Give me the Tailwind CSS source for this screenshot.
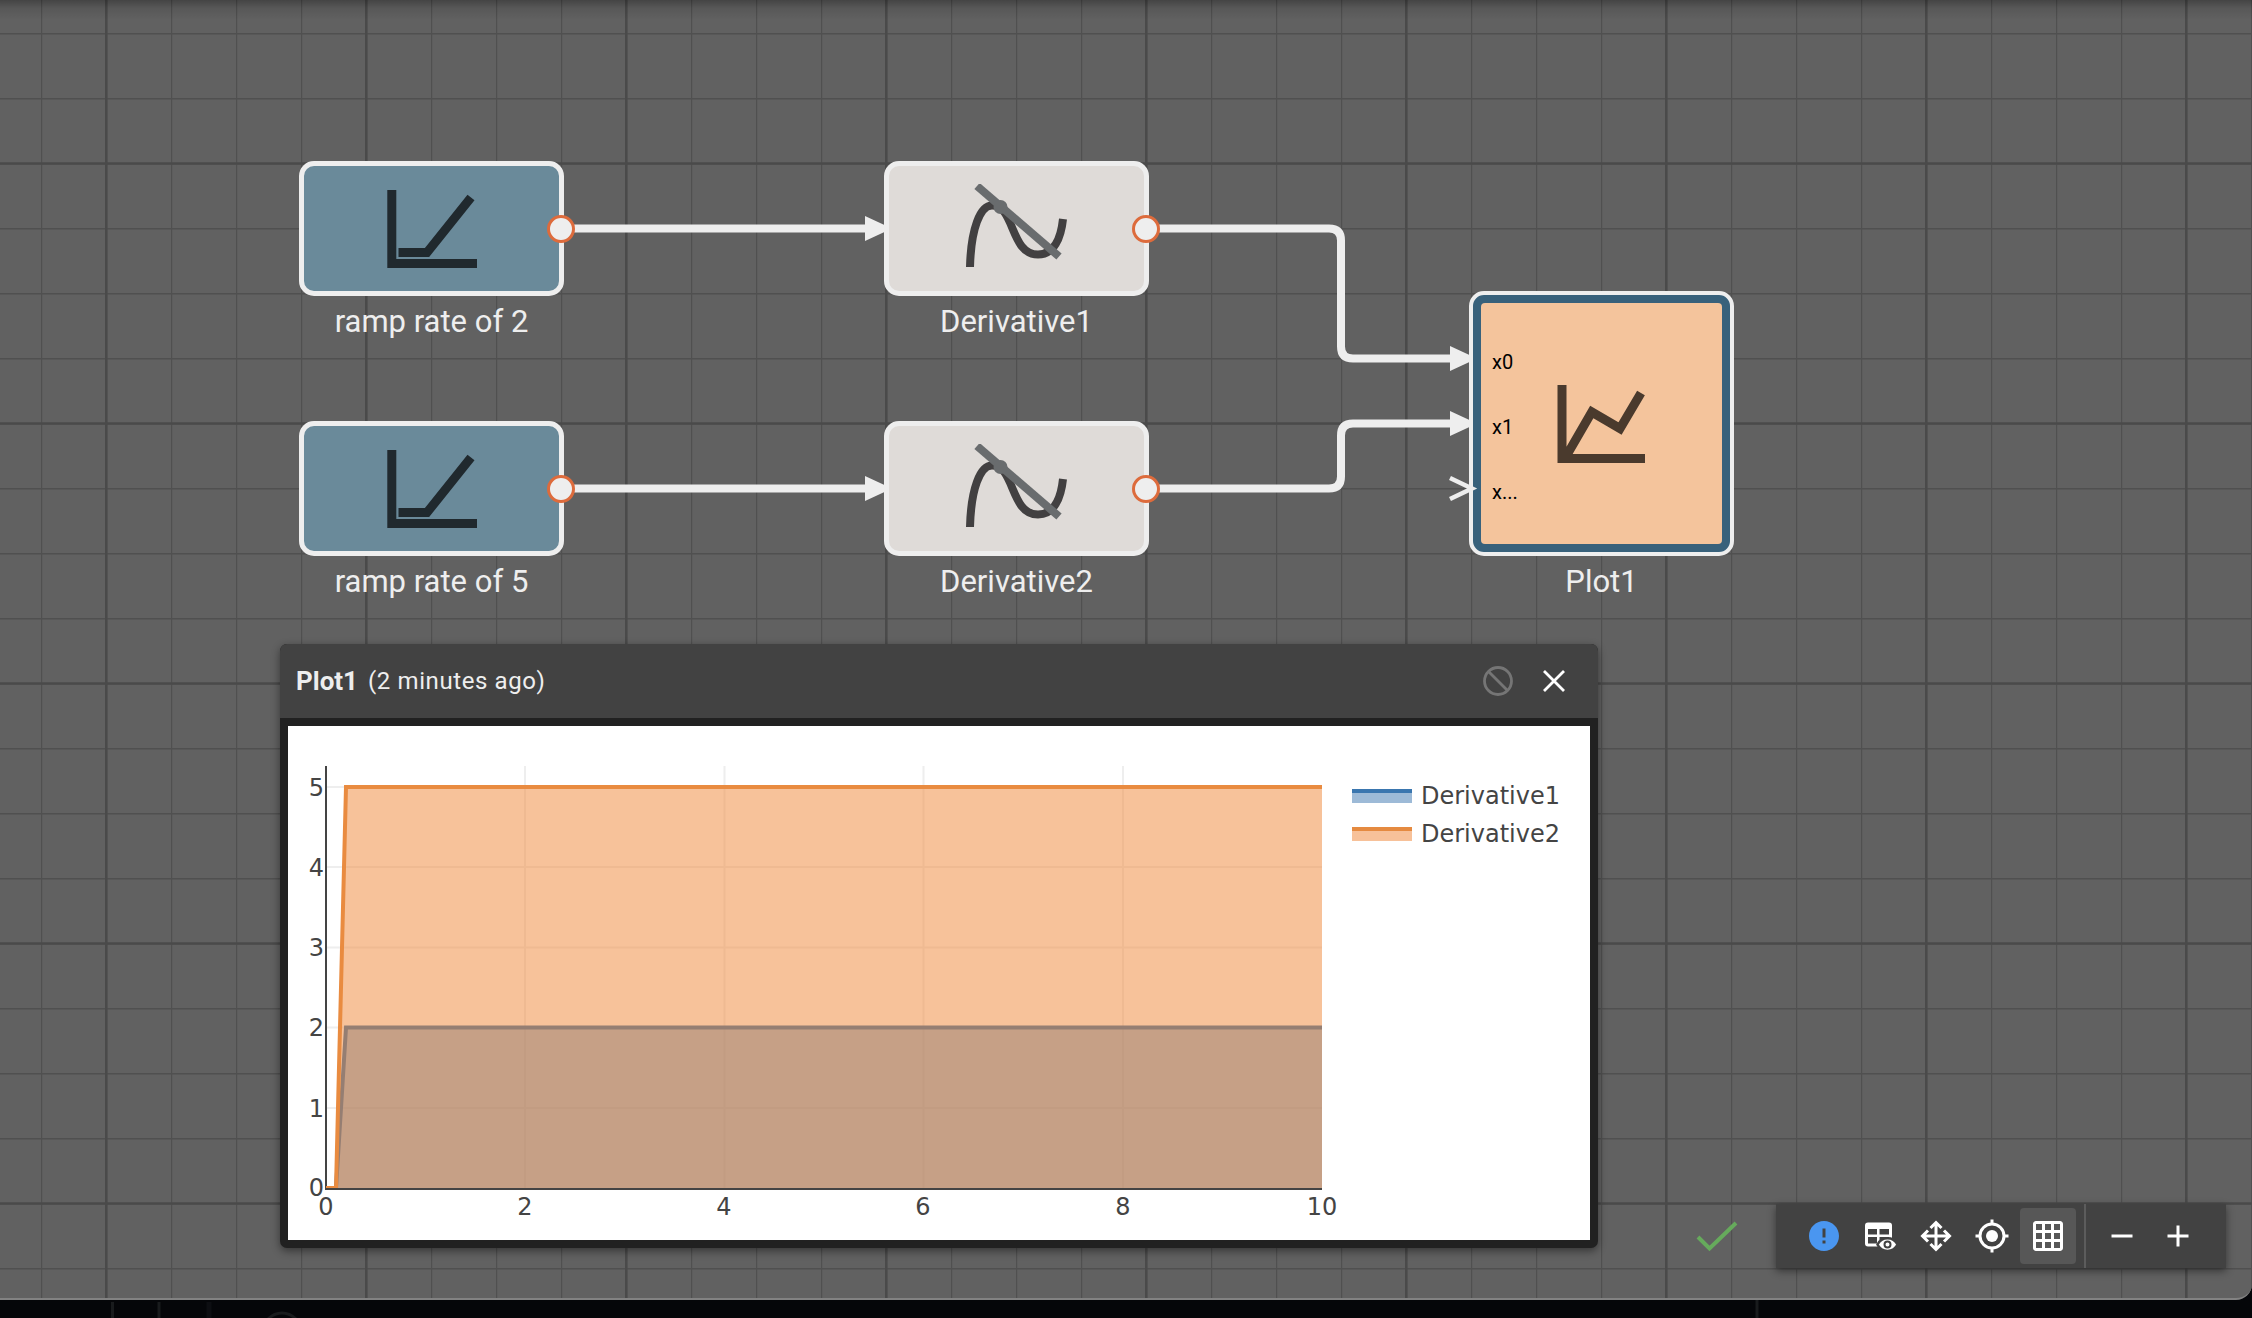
<!DOCTYPE html>
<html lang="en">
<head>
<meta charset="utf-8">
<title>Model canvas</title>
<script src="https://cdn.jsdelivr.net/npm/@tailwindcss/browser@4"></script>
</head>
<body class="flex h-screen flex-col overflow-hidden bg-[#050609] font-['Roboto',sans-serif] text-[#eeeeee]">
<main class="relative flex-1 overflow-hidden rounded-br-[16px] border-b-2 border-[#828282] bg-[#616161]">
  <!-- grid and edges -->
  <svg class="absolute inset-0 h-full w-full" aria-hidden="true">
    <defs>
      <pattern id="minor" x="41" y="33" width="65" height="65" patternUnits="userSpaceOnUse"><path d="M0 0.75H65M0.5 0V65" stroke="#505050" stroke-width="1.5"/></pattern>
      <pattern id="major" x="105" y="162" width="260" height="260" patternUnits="userSpaceOnUse"><path d="M0 1.5H260M1.25 0V260" stroke="#4a4a4a" stroke-width="2.5"/></pattern>
      <linearGradient id="shade" x1="0" y1="0" x2="0" y2="1"><stop offset="0" stop-color="#000" stop-opacity=".3"/><stop offset=".4" stop-color="#000" stop-opacity=".1"/><stop offset="1" stop-color="#000" stop-opacity="0"/></linearGradient>
    </defs>
    <rect width="100%" height="100%" fill="url(#minor)"/>
    <rect width="100%" height="100%" fill="url(#major)"/>
    <rect width="100%" height="20" fill="url(#shade)"/>
    <g fill="none" stroke="#eeeeee" stroke-width="8">
      <path d="M561 228.500H870M561 488.500H870"/>
      <path d="M1146 228.500H1329Q1341 228.500 1341 240.500V346.500Q1341 358.500 1353 358.500H1455"/>
      <path d="M1146 488.500H1329Q1341 488.500 1341 476.500V435.500Q1341 423.500 1353 423.500H1455"/>
    </g>
    <g fill="#eeeeee">
      <path d="M865 216L892 228.500L865 241ZM865 476L892 488.500L865 501ZM1450 346L1477 358.500L1450 371ZM1450 411L1477 423.500L1450 436Z"/>
    </g>
  </svg>

  <!-- ramp blocks -->
  <figure class="absolute left-[299px] top-[161px] flex w-[265px] flex-col items-center">
    <div class="flex h-[135px] w-full items-center justify-center rounded-[15px] border-5 border-[#eeeeee] bg-[#6a8a9a]">
      <svg class="h-[80px] w-[90px]" viewBox="387 188 90 80" fill="none" stroke="#20292e" stroke-width="9"><path d="M391.800 189V262.500H477M398.500 251.500H427L471 196.500"/></svg>
    </div>
    <figcaption class="mt-[6px] text-[31px] leading-10 whitespace-nowrap">ramp rate of 2</figcaption>
    <span class="absolute -right-[11px] top-[54px] size-7 rounded-full border-3 border-[#dd6b3c] bg-[#eeeeee]"></span>
  </figure>
  <figure class="absolute left-[299px] top-[421px] flex w-[265px] flex-col items-center">
    <div class="flex h-[135px] w-full items-center justify-center rounded-[15px] border-5 border-[#eeeeee] bg-[#6a8a9a]">
      <svg class="h-[80px] w-[90px]" viewBox="387 188 90 80" fill="none" stroke="#20292e" stroke-width="9"><path d="M391.800 189V262.500H477M398.500 251.500H427L471 196.500"/></svg>
    </div>
    <figcaption class="mt-[6px] text-[31px] leading-10 whitespace-nowrap">ramp rate of 5</figcaption>
    <span class="absolute -right-[11px] top-[54px] size-7 rounded-full border-3 border-[#dd6b3c] bg-[#eeeeee]"></span>
  </figure>

  <!-- derivative blocks -->
  <figure class="absolute left-[884px] top-[161px] flex w-[265px] flex-col items-center">
    <div class="flex h-[135px] w-full items-center justify-center rounded-[15px] border-5 border-[#eeeeee] bg-[#dfdbd8]">
      <svg class="h-[90px] w-[104px]" viewBox="965 184 104 90" fill="none"><path d="M970 267C971 229 980 205.500 992 205.500C1015 205.500 1010 254.500 1038 254.500C1054 254.500 1061 238 1063 219" stroke="#424041" stroke-width="8"/><path d="M977 186L1059 256.500" stroke="#696c6e" stroke-width="8"/><circle cx="1000.500" cy="207" r="7" fill="#696c6e"/></svg>
    </div>
    <figcaption class="mt-[6px] text-[31px] leading-10 whitespace-nowrap">Derivative1</figcaption>
    <span class="absolute -right-[11px] top-[54px] size-7 rounded-full border-3 border-[#dd6b3c] bg-[#eeeeee]"></span>
  </figure>
  <figure class="absolute left-[884px] top-[421px] flex w-[265px] flex-col items-center">
    <div class="flex h-[135px] w-full items-center justify-center rounded-[15px] border-5 border-[#eeeeee] bg-[#dfdbd8]">
      <svg class="h-[90px] w-[104px]" viewBox="965 184 104 90" fill="none"><path d="M970 267C971 229 980 205.500 992 205.500C1015 205.500 1010 254.500 1038 254.500C1054 254.500 1061 238 1063 219" stroke="#424041" stroke-width="8"/><path d="M977 186L1059 256.500" stroke="#696c6e" stroke-width="8"/><circle cx="1000.500" cy="207" r="7" fill="#696c6e"/></svg>
    </div>
    <figcaption class="mt-[6px] text-[31px] leading-10 whitespace-nowrap">Derivative2</figcaption>
    <span class="absolute -right-[11px] top-[54px] size-7 rounded-full border-3 border-[#dd6b3c] bg-[#eeeeee]"></span>
  </figure>

  <!-- plot block -->
  <figure class="absolute left-[1469px] top-[291px] flex w-[265px] flex-col items-center">
    <div class="h-[265px] w-full rounded-[15px] border-4 border-[#eeeeee] bg-[#38617b] p-2">
      <div class="flex h-full items-center rounded-[4px] bg-[#f4c49c] pl-[11px]">
        <ul class="flex flex-col pt-2 text-[20px] leading-[65px] text-black"><li>x0</li><li>x1</li><li>x...</li></ul>
        <svg class="ml-[39px] h-[80px] w-[88px]" viewBox="1557 384 88 80" fill="none" stroke="#4a3a2d" stroke-width="9"><path d="M1562 385V458.500H1645M1564 460L1591.800 412L1620 428.500L1641 393"/></svg>
      </div>
    </div>
    <figcaption class="mt-[6px] text-[31px] leading-10 whitespace-nowrap">Plot1</figcaption>
    <svg class="absolute -left-[21px] top-[183px] h-[30px] w-8" viewBox="1448 474 32 30" fill="none" stroke="#eeeeee" stroke-width="4.500" aria-hidden="true"><path d="M1450 478L1472 488.500L1450 499"/></svg>
  </figure>

  <!-- plot window -->
  <section class="absolute left-[280px] top-[644px] w-[1318px] overflow-hidden rounded-[7px] bg-[#212121] shadow-[0_3px_8px_rgba(0,0,0,0.45)]">
    <header class="flex h-[74px] items-center bg-[#424242] pl-4 pr-4">
      <h2 class="text-[26px] font-bold">Plot1</h2>
      <span class="ml-[10px] text-[24px] tracking-wide">(2 minutes ago)</span>
      <button class="ml-auto flex size-14 items-center justify-center" aria-label="Disable"><svg class="size-8" viewBox="0 0 32 32" fill="none" stroke="#757575" stroke-width="2.800"><circle cx="16" cy="16" r="13.500"/><path d="M6.500 6.500L25.500 25.500"/></svg></button>
      <button class="flex size-14 items-center justify-center" aria-label="Close"><svg class="size-8" viewBox="0 0 32 32" fill="none" stroke="#fff" stroke-width="2.800"><path d="M6 6L26 26M26 6L6 26"/></svg></button>
    </header>
    <div class="p-2">
      <svg class="block h-[514px] w-full bg-white font-['DejaVu_Sans',sans-serif] text-[24px]" viewBox="288 726 1302 514" fill="#444">
        <path d="M525 766V1188M724.500 766V1188M923.500 766V1188M1123 766V1188M326 787H1322M326 867H1322M326 947.500H1322M326 1027.500H1322M326 1108H1322" stroke="#eee" stroke-width="2"/>
        <clipPath id="area"><rect x="326" y="766" width="996" height="422"/></clipPath>
        <path d="M326 766V1189H1322" fill="none" stroke="#444" stroke-width="2"/>
        <g clip-path="url(#area)">
          <path d="M336 1188L346 1027.500H1322V1188Z" fill="#3a76af" fill-opacity=".5"/>
          <path d="M326 1188H336L346 1027.500H1322" fill="none" stroke="#3a76af" stroke-width="4"/>
          <path d="M336 1188L346 787H1322V1188Z" fill="#ef8536" fill-opacity=".5"/>
          <path d="M326 1188H336L346 787H1322" fill="none" stroke="#e98b40" stroke-width="4"/>
        </g>
        <g text-anchor="end"><text x="324" y="796">5</text><text x="324" y="876">4</text><text x="324" y="956">3</text><text x="324" y="1036">2</text><text x="324" y="1117">1</text><text x="324" y="1196">0</text></g>
        <g text-anchor="middle"><text x="326" y="1215">0</text><text x="525" y="1215">2</text><text x="724" y="1215">4</text><text x="923" y="1215">6</text><text x="1123" y="1215">8</text><text x="1322" y="1215">10</text></g>
        <path d="M1352 791H1412V803H1352Z" fill="#9dbad7"/><path d="M1352 791H1412" stroke="#3a76af" stroke-width="4"/>
        <path d="M1352 829H1412V841H1352Z" fill="#f7c199"/><path d="M1352 829H1412" stroke="#e58a40" stroke-width="4"/>
        <text x="1421" y="804">Derivative1</text><text x="1421" y="842">Derivative2</text>
      </svg>
    </div>
  </section>

  <!-- status and canvas tools -->
  <div class="absolute bottom-[30px] right-[26px] flex items-center">
    <svg class="mr-[36px] h-8 w-12" viewBox="0 0 48 32" fill="none" stroke="#66aa5c" stroke-width="4" role="img" aria-label="Model up to date"><path d="M6 17L17.500 28.500L44 3"/></svg>
    <div class="flex h-16 bg-[#424242] shadow-[0_3px_8px_rgba(0,0,0,0.45)]" role="toolbar">
      <div class="flex items-center border-r-2 border-[#5c5c5c] pl-5 pr-2">
        <button class="flex size-14 items-center justify-center" aria-label="Information"><svg class="size-9" viewBox="0 0 24 24"><path fill="#4a96f0" d="M12 2C6.480 2 2 6.480 2 12s4.480 10 10 10 10-4.480 10-10S17.520 2 12 2zm1 15h-2v-2h2v2zm0-4h-2V7h2v6z"/></svg></button>
        <button class="flex size-14 items-center justify-center" aria-label="Preview data"><svg class="size-9" viewBox="0 0 36 36" fill="none"><path fill="#fff" fill-rule="evenodd" d="M6 4.500H27A3 3 0 0 1 30 7.500V22H17.500V28.500H6A3 3 0 0 1 3 25.500V7.500A3 3 0 0 1 6 4.500ZM6 11V16.500H15V11ZM17.500 11V16.500H27V11ZM6 19V25.500H15V19ZM17.500 19V25.500H27V19Z"/><path d="M15.500 26.500C19.500 18 31.500 18 35.500 26.500C31.500 35 19.500 35 15.500 26.500Z" fill="#fff" stroke="#424242" stroke-width="2.500"/><circle cx="25.500" cy="26.500" r="3" stroke="#424242" stroke-width="2"/></svg></button>
        <button class="flex size-14 items-center justify-center" aria-label="Fit to view"><svg class="size-9" viewBox="0 0 36 36" fill="none" stroke="#fff" stroke-width="3"><path d="M18 5V31M5 18H31M12.500 10L18 4.500L23.500 10M12.500 26L18 31.500L23.500 26M10 12.500L4.500 18L10 23.500M26 12.500L31.500 18L26 23.500"/></svg></button>
        <button class="flex size-14 items-center justify-center" aria-label="Center"><svg class="size-9" viewBox="0 0 36 36" fill="none" stroke="#fff" stroke-width="3"><circle cx="18" cy="18" r="12"/><circle cx="18" cy="18" r="6" fill="#fff" stroke="none"/><path d="M18 1.500V6M18 30V34.500M1.500 18H6M30 18H34.500"/></svg></button>
        <button class="flex size-14 items-center justify-center rounded bg-[#575757]" aria-label="Toggle grid"><svg class="size-9" viewBox="0 0 24 24" fill="#fff"><path d="M20 2H4c-1.100 0-2 .9-2 2v16c0 1.100.9 2 2 2h16c1.100 0 2-.9 2-2V4c0-1.100-.9-2-2-2zM8 20H4v-4h4v4zm0-6H4v-4h4v4zm0-6H4V4h4v4zm6 12h-4v-4h4v4zm0-6h-4v-4h4v4zm0-6h-4V4h4v4zm6 12h-4v-4h4v4zm0-6h-4v-4h4v4zm0-6h-4V4h4v4z"/></svg></button>
      </div>
      <div class="flex items-center pl-2 pr-5">
        <button class="flex size-14 items-center justify-center" aria-label="Zoom out"><svg class="size-9" viewBox="0 0 36 36" stroke="#fff" stroke-width="3"><path d="M7.500 18H28.500"/></svg></button>
        <button class="flex size-14 items-center justify-center" aria-label="Zoom in"><svg class="size-9" viewBox="0 0 36 36" stroke="#fff" stroke-width="3"><path d="M7.500 18H28.500M18 7.500V28.500"/></svg></button>
      </div>
    </div>
  </div>
</main>
<footer class="h-[18px] shrink-0 overflow-hidden">
  <svg class="block h-full w-full" fill="none" stroke="#191b1d" stroke-width="3" aria-hidden="true"><path d="M112.500 2V18M159 2V18M1757 0V18"/><path d="M209 2V18" stroke="#0d0e12" stroke-width="5"/><circle cx="282" cy="32" r="19"/></svg>
</footer>
</body>
</html>
